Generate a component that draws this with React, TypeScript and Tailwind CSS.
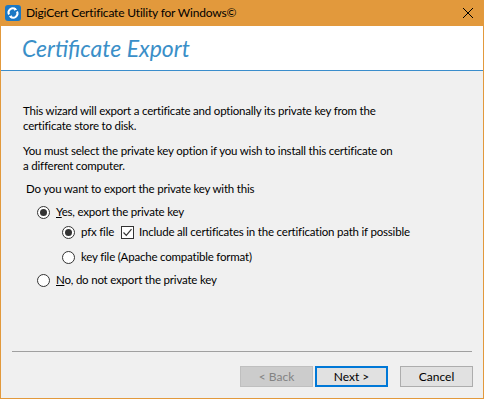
import React, { useState } from "react";

const font = "font-['Lato','Liberation_Sans',sans-serif]";

const Radio = ({ checked }: { checked?: boolean }) => (
  <span className="flex h-[13px] w-[13px] shrink-0 items-center justify-center rounded-full border border-[#333] bg-white">
    {checked && <span className="h-[7px] w-[7px] rounded-full bg-[#333]" />}
  </span>
);

const Checkbox = ({ checked }: { checked?: boolean }) => (
  <span className="flex h-[13px] w-[13px] shrink-0 items-center justify-center border border-[#333] bg-white">
    {checked && (
      <svg width="11" height="11" viewBox="0 0 11 11">
        <path d="M1.5 5.5 L4.3 8.3 L9.5 2.2" fill="none" stroke="#333" strokeWidth="1.2" />
      </svg>
    )}
  </span>
);

const AppIcon = () => (
  <svg width="16" height="16" viewBox="0 0 16 16">
    <rect x="0" y="0" width="16" height="16" rx="3" fill="#1b78c4" />
    <path d="M4 9.5 A4.3 4.3 0 0 1 10.5 4.2" fill="none" stroke="#fff" strokeWidth="2" />
    <path d="M12 6.5 A4.3 4.3 0 0 1 5.5 11.8" fill="none" stroke="#fff" strokeWidth="2" />
    <path d="M9.6 2.4 L12.2 4.6 L9 5.8 Z" fill="#fff" />
    <path d="M6.4 13.6 L3.8 11.4 L7 10.2 Z" fill="#fff" />
  </svg>
);

const Button = ({
  label,
  disabled,
  primary,
}: {
  label: string;
  disabled?: boolean;
  primary?: boolean;
}) => (
  <button
    className={
      disabled
        ? "h-[21px] w-[73px] border border-[#bfbfbf] bg-[#cccccc] text-[12px] text-[#838383]"
        : primary
          ? "h-[21px] w-[73px] border-2 border-[#0078d7] bg-[#e1e1e1] text-[12px] text-black"
          : "h-[21px] w-[73px] border border-[#adadad] bg-[#e1e1e1] text-[12px] text-black"
    }
  >
    {label}
  </button>
);

export default function App() {
  const [key, setKey] = useState(true);

  return (
    <div className={`flex h-[399px] w-[484px] flex-col border-x border-b border-[#e2993c] text-black ${font}`}>
      {/* title bar */}
      <div className="-mx-px flex h-[26px] shrink-0 items-center bg-[#e2993c] pl-[5px] pr-[11px] text-[12px] tracking-[-0.18px]">
        <AppIcon />
        <span className="ml-[5px] flex-1">DigiCert Certificate Utility for Windows©</span>
        <svg width="10" height="10" viewBox="0 0 10 10">
          <path d="M0 0 L10 10 M10 0 L0 10" stroke="#000" strokeWidth="1" />
        </svg>
      </div>

      {/* header */}
      <div className="flex h-[45px] shrink-0 items-center border-b border-[#3a8dcc] bg-white pl-[21px]">
        <h1 className="text-[23px] italic text-[#3a8fc8]">Certificate Export</h1>
      </div>

      {/* body */}
      <div className="flex flex-1 flex-col bg-[#f0f0f0] text-[11.5px] tracking-[-0.2px]">
        <div className="px-[22px] pt-[32px] leading-[15px]">
          <p>
            This wizard will export a certificate and optionally its private key from the
            <br />
            certificate store to disk.
          </p>
          <p className="mt-[10px]">
            You must select the private key option if you wish to install this certificate on
            <br />a different computer.
          </p>
          <p className="mt-[8px] pl-[3px]">Do you want to export the private key with this</p>
        </div>

        <div className="pl-[36px]">
          <div className="mt-[8px] flex h-[16px] items-center gap-[6px]" onClick={() => setKey(true)}>
            <Radio checked={key} />
            <span>
              <span className="underline">Y</span>es, export the private key
            </span>
          </div>
          <div className="ml-[25px] mt-[4px] flex h-[16px] items-center">
            <Radio checked />
            <span className="ml-[6px]">pfx file</span>
            <span className="ml-[7px]">
              <Checkbox checked />
            </span>
            <span className="ml-[5px]">Include all certificates in the certification path if possible</span>
          </div>
          <div className="ml-[25px] mt-[9px] flex h-[16px] items-center gap-[6px]">
            <Radio />
            <span>key file (Apache compatible format)</span>
          </div>
          <div className="mt-[7px] flex h-[16px] items-center gap-[6px]" onClick={() => setKey(false)}>
            <Radio checked={!key} />
            <span>
              <span className="underline">N</span>o, do not export the private key
            </span>
          </div>
        </div>

        <div className="flex-1" />
        <div className="mx-[11px] h-px bg-[#a0a0a0]" />
        <div className="mb-[11px] mt-[14px] flex justify-end pr-[10px] tracking-normal">
          <Button label="< Back" disabled />
          <span className="ml-[2px]">
            <Button label="Next >" primary />
          </span>
          <span className="ml-[12px]">
            <Button label="Cancel" />
          </span>
        </div>
      </div>
    </div>
  );
}
